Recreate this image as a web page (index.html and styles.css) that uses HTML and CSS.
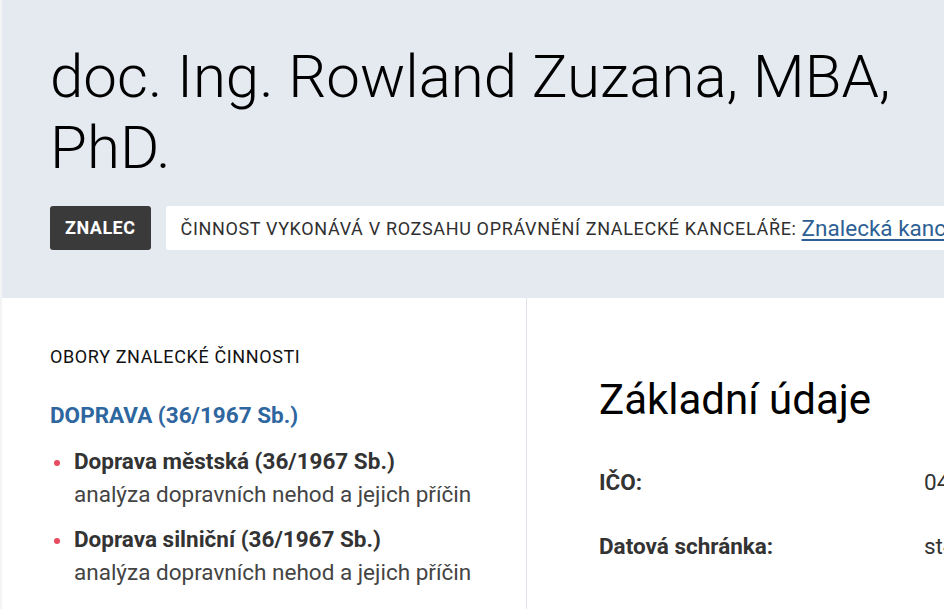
FILE: index.html
```html
<!DOCTYPE html>
<html lang="cs">
<head>
<meta charset="utf-8">
<link rel="stylesheet" href="styles.css">
</head>
<body>
<div class="page">
  <header class="hero">
    <h1 class="title">doc. Ing. Rowland Zuzana, MBA, PhD.</h1>
    <div class="tags">
      <span class="badge">ZNALEC</span>
      <div class="note">
        <span class="note-label">Činnost vykonává v rozsahu oprávnění znalecké kanceláře:</span>
        <a class="note-link" href="#">Znalecká kancelář Rowland s.r.o.</a>
      </div>
    </div>
  </header>
  <main class="content">
    <section class="left">
      <h2 class="section-label">Obory znalecké činnosti</h2>
      <h3 class="field">DOPRAVA (36/1967 Sb.)</h3>
      <ul class="list">
        <li class="item">
          <strong class="item-title">Doprava městská (36/1967 Sb.)</strong>
          <span class="item-desc">analýza dopravních nehod a jejich příčin</span>
        </li>
        <li class="item">
          <strong class="item-title">Doprava silniční (36/1967 Sb.)</strong>
          <span class="item-desc">analýza dopravních nehod a jejich příčin</span>
        </li>
      </ul>
    </section>
    <section class="right">
      <h2 class="right-title">Základní údaje</h2>
      <dl class="facts">
        <div class="fact"><dt>IČO:</dt><dd>04582731</dd></div>
        <div class="fact"><dt>Datová schránka:</dt><dd>st4kx9q</dd></div>
      </dl>
    </section>
  </main>
</div>
</body>
</html>
```

FILE: styles.css
```css
* { box-sizing: border-box; }
html, body { margin: 0; padding: 0; }
body {
  font-family: Roboto, "Noto Sans", sans-serif;
  background: #fff;
  overflow: hidden;
  width: 944px;
  height: 609px;
}
.page {
  border-left: 2px solid #f3f4f6;
  min-height: 609px;
}
.hero {
  background: #e5eaf1;
  padding: 41px 0 0 48px;
  height: 298px;
}
.title {
  margin: 0;
  font-weight: 300;
  font-size: 60px;
  line-height: 71px;
  color: #000;
  max-width: 880px;
}
.tags {
  display: flex;
  gap: 15px;
  margin-top: 23px;
  white-space: nowrap;
}
.badge {
  flex: none;
  background: #3a3a3a;
  color: #fff;
  font-weight: 700;
  font-size: 18px;
  letter-spacing: 0.5px;
  height: 44px;
  line-height: 44px;
  padding: 0 15px;
  border-radius: 3px;
}
.note {
  flex: none;
  background: #fff;
  height: 44px;
  border-radius: 3px;
  padding: 0 15px;
  display: flex;
  align-items: center;
  gap: 5px;
}
.note-label {
  text-transform: uppercase;
  font-size: 18px;
  font-weight: 400;
  letter-spacing: 0.66px;
  color: #2f2f2f;
}
.note-link {
  font-size: 22.5px;
  color: #2d5f94;
  text-decoration: underline;
  text-underline-offset: 3px;
}
.content {
  display: flex;
}
.left {
  width: 525px;
  flex: none;
  padding: 49px 20px 0 48px;
  border-right: 1px solid #dde2e8;
  min-height: 311px;
}
.section-label {
  margin: 0;
  text-transform: uppercase;
  font-size: 18px;
  font-weight: 400;
  letter-spacing: 0.62px;
  color: #111;
  line-height: 20px;
}
.field {
  margin: 32px 0 0;
  font-size: 22.5px;
  font-weight: 700;
  color: #2e66a0;
  line-height: 33px;
}
.list {
  list-style: none;
  margin: 13px 0 0;
  padding: 0;
}
.item {
  position: relative;
  padding-left: 24px;
  margin-bottom: 12px;
}
.item::before {
  content: "";
  position: absolute;
  left: 4px;
  top: 15px;
  width: 6px;
  height: 6px;
  border-radius: 50%;
  background: #e84a5f;
}
.item-title {
  display: block;
  font-size: 22.5px;
  font-weight: 700;
  color: #333;
  line-height: 33px;
}
.item-desc {
  display: block;
  font-size: 22.5px;
  color: #444;
  line-height: 33px;
}
.right {
  flex: 1;
  padding: 74px 0 0 72px;
  white-space: nowrap;
}
.right-title {
  margin: 0;
  font-size: 42px;
  font-weight: 400;
  color: #000;
  line-height: 56px;
}
.facts {
  margin: 38px 0 0;
}
.fact {
  display: flex;
  margin-bottom: 31px;
}
.fact dt {
  width: 325px;
  flex: none;
  font-size: 22.5px;
  font-weight: 700;
  color: #333;
  line-height: 33px;
}
.fact dd {
  margin: 0;
  font-size: 22.5px;
  color: #333;
  line-height: 33px;
}
```
